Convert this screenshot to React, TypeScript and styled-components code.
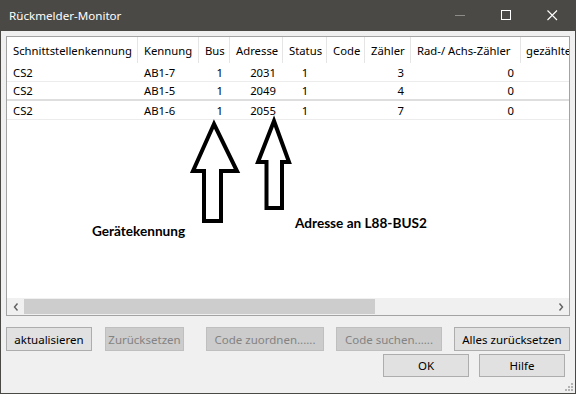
import React from "react";
import styled, { createGlobalStyle } from "styled-components";

const FONT = `"Noto Sans", "Liberation Sans", sans-serif`;

const Global = createGlobalStyle`
  html, body { margin: 0; padding: 0; background: #ffffff; }
  body { font-family: ${FONT}; }
`;

const Window = styled.div`
  position: relative;
  width: 576px;
  height: 394px;
  box-sizing: border-box;
  border: 1px solid #4b4945;
  border-top: none;
  background: #f0f0f0;
  display: flex;
  flex-direction: column;
  font-family: ${FONT};
  font-size: 11.3px;
  color: #000;
  overflow: hidden;
`;

const TitleBar = styled.div`
  height: 31px;
  flex: none;
  background: #4b4945;
  display: flex;
  align-items: center;
  padding-left: 8px;
  color: #ffffff;
  font-size: 11.6px;
`;

const Title = styled.div`
  flex: 1;
  white-space: nowrap;
`;

const CaptionButton = styled.div`
  width: 46px;
  height: 31px;
  display: flex;
  align-items: center;
  justify-content: center;
`;

const Body = styled.div`
  flex: 1;
  display: flex;
  flex-direction: column;
  padding: 5px 5px 0 5px;
`;

const Panel = styled.div`
  height: 280px;
  box-sizing: border-box;
  border: 1px solid #a3a3a3;
  background: #ffffff;
  display: flex;
  flex-direction: column;
`;

const ScrollArea = styled.div`
  position: relative;
  flex: 1;
  overflow: hidden;
`;

const COLS = "131px 61px 31px 53px 44px 38px 46px 110px 48px";

const HeaderRow = styled.div`
  display: grid;
  grid-template-columns: ${COLS};
  height: 26px;
`;

const HeaderCell = styled.div`
  box-sizing: border-box;
  border-right: 1px solid #e5e5e5;
  padding-left: 6px;
  display: flex;
  align-items: center;
  white-space: nowrap;
  overflow: hidden;
`;

const LastHeaderCell = styled(HeaderCell)`
  border-right: none;
  padding-left: 5px;
`;

const Row = styled.div<{ $thick?: boolean }>`
  display: grid;
  grid-template-columns: ${COLS};
  height: 19px;
  box-sizing: border-box;
  border-bottom: ${(p) => (p.$thick ? "2px solid #dedede" : "1px solid #ececec")};
`;

const Cell = styled.div<{ $align?: "left" | "right" | "center" }>`
  box-sizing: border-box;
  display: flex;
  align-items: center;
  white-space: nowrap;
  overflow: hidden;
  padding: ${(p) => (p.$align === "right" ? "0 7px 0 0" : p.$align === "center" ? "0" : "0 0 0 6px")};
  justify-content: ${(p) =>
    p.$align === "right" ? "flex-end" : p.$align === "center" ? "center" : "flex-start"};
`;

const Overlay = styled.svg`
  position: absolute;
  left: 0;
  top: 0;
`;

const Note = styled.div<{ $x: number; $y: number }>`
  position: absolute;
  left: ${(p) => p.$x}px;
  top: ${(p) => p.$y}px;
  font-family: "Lato", "Open Sans", sans-serif;
  font-weight: 700;
  font-size: 13.6px;
  line-height: 16px;
  color: #000;
  white-space: nowrap;
`;

const ScrollBar = styled.div`
  height: 17px;
  flex: none;
  display: flex;
  background: #f0f0f0;
`;

const ScrollArrow = styled.div`
  width: 17px;
  display: flex;
  align-items: center;
  justify-content: center;
`;

const Track = styled.div`
  flex: 1;
  display: flex;
  padding: 1px 0;
`;

const Thumb = styled.div`
  width: 351px;
  background: #cdcdcd;
`;

const ButtonRow = styled.div<{ $mt: number }>`
  display: flex;
  margin-top: ${(p) => p.$mt}px;
`;

const ButtonRight = styled.div`
  display: flex;
  justify-content: flex-end;
  gap: 10px;
  padding-right: 5px;
  margin-top: 3px;
`;

const Button = styled.div<{ $w: number; $ml?: number; $h?: number; $disabled?: boolean }>`
  width: ${(p) => p.$w}px;
  height: ${(p) => p.$h ?? 24}px;
  margin-left: ${(p) => p.$ml ?? 0}px;
  box-sizing: border-box;
  border: 1px solid ${(p) => (p.$disabled ? "#bfbfbf" : "#adadad")};
  background: ${(p) => (p.$disabled ? "#cccccc" : "#e1e1e1")};
  color: ${(p) => (p.$disabled ? "#838383" : "#000")};
  display: flex;
  align-items: center;
  justify-content: center;
  white-space: nowrap;
  font-size: 11.5px;
`;

const Grip = styled.svg`
  position: absolute;
  right: 1px;
  bottom: 1px;
`;

const headers = [
  "Schnittstellenkennung",
  "Kennung",
  "Bus",
  "Adresse",
  "Status",
  "Code",
  "Zähler",
  "Rad-/ Achs-Zähler",
];

const rows = [
  { s: "CS2", k: "AB1-7", bus: "1", adr: "2031", st: "1", code: "", z: "3", rad: "0" },
  { s: "CS2", k: "AB1-5", bus: "1", adr: "2049", st: "1", code: "", z: "4", rad: "0" },
  { s: "CS2", k: "AB1-6", bus: "1", adr: "2055", st: "1", code: "", z: "7", rad: "0" },
];

export default function App() {
  return (
    <>
      <Global />
      <Window>
        <TitleBar>
          <Title>Rückmelder-Monitor</Title>
          <CaptionButton>
            <svg width="11" height="11" viewBox="0 0 11 11">
              <line x1="0" y1="5.5" x2="10" y2="5.5" stroke="#8e8c89" strokeWidth="1" />
            </svg>
          </CaptionButton>
          <CaptionButton>
            <svg width="11" height="11" viewBox="0 0 11 11">
              <rect x="0.5" y="0.5" width="9" height="9" fill="none" stroke="#ffffff" strokeWidth="1" />
            </svg>
          </CaptionButton>
          <CaptionButton>
            <svg width="11" height="11" viewBox="0 0 11 11">
              <path d="M0.5 0.5 L10 10 M10 0.5 L0.5 10" stroke="#ffffff" strokeWidth="1.1" />
            </svg>
          </CaptionButton>
        </TitleBar>
        <Body>
          <Panel>
            <ScrollArea>
              <HeaderRow>
                {headers.map((h) => (
                  <HeaderCell key={h}>{h}</HeaderCell>
                ))}
                <LastHeaderCell>gezählte</LastHeaderCell>
              </HeaderRow>
              {rows.map((r, i) => (
                <Row key={i} $thick={i === 1}>
                  <Cell>{r.s}</Cell>
                  <Cell>{r.k}</Cell>
                  <Cell $align="right">{r.bus}</Cell>
                  <Cell $align="right">{r.adr}</Cell>
                  <Cell $align="center">{r.st}</Cell>
                  <Cell>{r.code}</Cell>
                  <Cell $align="right">{r.z}</Cell>
                  <Cell $align="right">{r.rad}</Cell>
                  <Cell />
                </Row>
              ))}
              <Overlay width="562" height="261" viewBox="7 37 562 261">
                <path
                  d="M214 124 L193 171 L204 171 L204 221 L221 221 L221 171 L237 171 Z"
                  fill="none"
                  stroke="#000"
                  strokeWidth="4"
                  strokeLinejoin="miter"
                />
                <path
                  d="M274 121 L258 162 L266.5 162 L266.5 208 L282 208 L282 162 L289 162 Z"
                  fill="none"
                  stroke="#000"
                  strokeWidth="4"
                  strokeLinejoin="miter"
                />
              </Overlay>
              <Note $x={85} $y={186}>Gerätekennung</Note>
              <Note $x={288} $y={178}>Adresse an L88-BUS2</Note>
            </ScrollArea>
            <ScrollBar>
              <ScrollArrow>
                <svg width="6" height="8" viewBox="0 0 6 8">
                  <polyline points="4.5,0.5 1.5,4 4.5,7.5" fill="none" stroke="#606060" strokeWidth="1.4" />
                </svg>
              </ScrollArrow>
              <Track>
                <Thumb />
              </Track>
              <ScrollArrow>
                <svg width="6" height="8" viewBox="0 0 6 8">
                  <polyline points="1.5,0.5 4.5,4 1.5,7.5" fill="none" stroke="#606060" strokeWidth="1.4" />
                </svg>
              </ScrollArrow>
            </ScrollBar>
          </Panel>
          <ButtonRow $mt={11}>
            <Button $w={86}>aktualisieren</Button>
            <Button $w={79} $ml={13} $disabled>
              Zurücksetzen
            </Button>
            <Button $w={118} $ml={22} $disabled>
              Code zuordnen......
            </Button>
            <Button $w={106} $ml={12} $disabled>
              Code suchen......
            </Button>
            <Button $w={116} $ml={12}>
              Alles zurücksetzen
            </Button>
          </ButtonRow>
          <ButtonRight>
            <Button $w={86} $h={23}>
              OK
            </Button>
            <Button $w={86} $h={23}>
              Hilfe
            </Button>
          </ButtonRight>
        </Body>
        <Grip width="10" height="10" viewBox="0 0 10 10">
          <rect x="7" y="1" width="2" height="2" fill="#b4b4b4" />
          <rect x="4" y="4" width="2" height="2" fill="#b4b4b4" />
          <rect x="7" y="4" width="2" height="2" fill="#b4b4b4" />
          <rect x="1" y="7" width="2" height="2" fill="#b4b4b4" />
          <rect x="4" y="7" width="2" height="2" fill="#b4b4b4" />
          <rect x="7" y="7" width="2" height="2" fill="#b4b4b4" />
        </Grip>
      </Window>
    </>
  );
}
